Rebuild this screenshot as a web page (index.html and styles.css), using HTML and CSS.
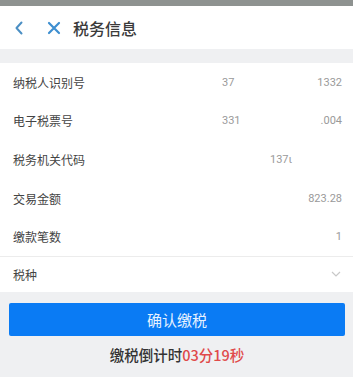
FILE: index.html
```html
<!DOCTYPE html>
<html lang="zh">
<head>
<meta charset="utf-8">
<link rel="stylesheet" href="styles.css">
</head>
<body>
<div class="status"></div>
<header class="header">
  <svg class="ic-back" width="10" height="14" viewBox="0 0 10 14"><path d="M7.5 1.5 L2.5 7 L7.5 12.5" fill="none" stroke="#4b8fc4" stroke-width="2" stroke-linecap="round" stroke-linejoin="round"/></svg>
  <svg class="ic-close" width="14" height="14" viewBox="0 0 14 14"><path d="M2 2 L12 12 M12 2 L2 12" fill="none" stroke="#3e8fd0" stroke-width="2.2" stroke-linecap="round"/></svg>
  <h1 class="title">税务信息</h1>
</header>
<div class="gap"></div>
<section class="list">
  <div class="row"><span class="label">纳税人识别号</span><span class="val"><span>37</span><span>1332</span></span></div>
  <div class="row"><span class="label">电子税票号</span><span class="val"><span>331</span><span>.004</span></span></div>
  <div class="row"><span class="label">税务机关代码</span><span class="val"><span class="v-mid">137ι</span></span></div>
  <div class="row"><span class="label">交易金额</span><span class="val val-end"><span>823.28</span></span></div>
  <div class="row"><span class="label">缴款笔数</span><span class="val val-end"><span>1</span></span></div>
  <div class="row row-last"><span class="label">税种</span>
    <svg class="ic-down" width="10" height="6" viewBox="0 0 10 6"><path d="M1 1 L5 5 L9 1" fill="none" stroke="#c8c8c8" stroke-width="1.2"/></svg>
  </div>
</section>
<div class="footer">
  <button class="btn">确认缴税</button>
  <p class="count">缴税倒计时<span class="red">03分19秒</span></p>
</div>
</body>
</html>
```
FILE: styles.css
```css
* { box-sizing: border-box; }
html, body { margin: 0; padding: 0; }
body {
  width: 353px;
  height: 377px;
  overflow: hidden;
  background: #eff0f2;
  font-family: "Noto Sans CJK SC", "Noto Sans", sans-serif;
  color: #333;
}
.status { height: 6px; background: #8e9290; }
.header {
  height: 43px;
  background: #fff;
  display: flex;
  align-items: center;
  padding-left: 14px;
}
.ic-back { margin-right: 23px; }
.ic-close { margin-right: 12px; }
.title {
  margin: 0;
  font-size: 16px;
  font-weight: 500;
  color: #3a3a3a;
  line-height: 1;
}
.gap { height: 14px; }
.list { background: #fff; }
.row {
  height: 38.6px;
  display: flex;
  align-items: center;
  padding: 0 11px 0 13px;
  font-size: 12px;
}
.label { flex: 1; color: #444; }
.val {
  width: 120px;
  display: flex;
  justify-content: space-between;
  color: #9a9a9a;
  font-size: 11px;
  font-family: "Roboto", "Noto Sans", sans-serif;
}
.val-end { justify-content: flex-end; }
.v-mid { margin-left: 48px; }
.row-last {
  height: 36px;
  border-top: 1px solid #ececec;
  padding-right: 12px;
}
.footer {
  padding: 11px 8px 0 9px;
  display: flex;
  flex-direction: column;
  align-items: center;
}
.btn {
  width: 100%;
  height: 33px;
  border: 0;
  border-radius: 2px;
  background: #0a7bf4;
  color: #e8f2ff;
  font-family: inherit;
  font-size: 15px;
  padding: 0;
}
.count {
  margin: 9px 0 0;
  font-size: 14.5px;
  font-weight: 500;
  color: #333;
  line-height: 20px;
}
.red { color: #e04a4a; }
```
